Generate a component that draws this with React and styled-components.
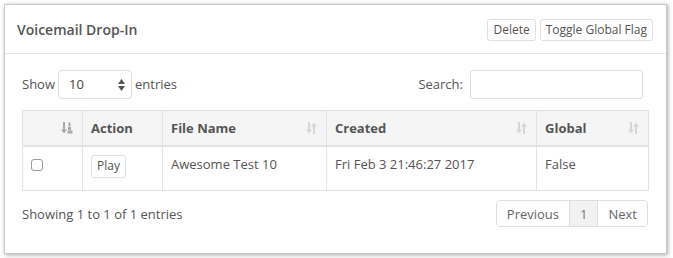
import React from "react";
import styled, { createGlobalStyle } from "styled-components";

const Global = createGlobalStyle`
  html, body {
    margin: 0;
    padding: 0;
    background: #fff;
  }
  body {
    font-family: "Open Sans", "Liberation Sans", sans-serif;
    font-size: 13px;
    color: #555;
  }
`;

const Page = styled.div`
  padding: 4px 6px 6px 4px;
`;

const Panel = styled.div`
  width: 661px;
  border: 1px solid #c8c8c8;
  box-shadow: 1px 1px 4px rgba(0, 0, 0, 0.35);
  background: #fff;
`;

const Header = styled.div`
  height: 48px;
  display: flex;
  align-items: center;
  justify-content: space-between;
  padding: 0 13px 0 12px;
  border-bottom: 1px solid #e6e6e6;
`;

const Title = styled.h3`
  margin: 0;
  font-size: 14px;
  font-weight: 600;
  color: #555;
`;

const Actions = styled.div`
  display: flex;
  gap: 4px;
  margin-top: 2px;
`;

const Button = styled.button`
  font-family: inherit;
  font-size: 12px;
  color: #555;
  background: #fff;
  border: 1px solid #e0e0e0;
  border-radius: 3px;
  height: ${props => props.h || 22}px;
  padding: 0 ${props => props.px || 5}px;
  line-height: 1;
  cursor: pointer;
`;

const Body = styled.div`
  padding: 15px 18px 26px 17px;
`;

const Controls = styled.div`
  display: flex;
  justify-content: space-between;
  align-items: center;
  height: 30px;
  margin-bottom: 11px;
`;

const Label = styled.label`
  display: flex;
  align-items: center;
  gap: ${props => props.gap || 4}px;
  margin-right: ${props => props.mr || 0}px;
  font-size: 13px;
  color: #555;
`;

const SelectBox = styled.div`
  position: relative;
  width: 74px;
  height: 29px;
  box-sizing: border-box;
`;

const Select = styled.select`
  appearance: none;
  width: 100%;
  height: 100%;
  box-sizing: border-box;
  border: 1px solid #ddd;
  border-radius: 4px;
  background: #fff;
  font-family: inherit;
  font-size: 13px;
  color: #444;
  padding: 0 10px;
`;

const Arrows = styled.svg`
  position: absolute;
  right: 7px;
  top: 9px;
  pointer-events: none;
`;

const SearchInput = styled.input`
  width: 173px;
  height: 29px;
  box-sizing: border-box;
  border: 1px solid #ddd;
  border-radius: 3px;
`;

const Table = styled.table`
  width: 626px;
  border-collapse: collapse;
  table-layout: fixed;
`;

const Th = styled.th`
  position: relative;
  height: 35px;
  box-sizing: border-box;
  padding: 0 8px;
  background: #f5f5f5;
  border: 1px solid #e3e3e3;
  border-bottom-width: 2px;
  text-align: left;
  font-size: 13px;
  font-weight: 700;
  color: #555;
`;

const Td = styled.td`
  height: 45px;
  box-sizing: border-box;
  padding: 8px 8px 0;
  vertical-align: top;
  border: 1px solid #e3e3e3;
  font-size: 13px;
  color: #555;
  line-height: 18px;
`;

const SortIcon = styled.svg`
  position: absolute;
  right: 9px;
  top: 11px;
`;

const Check = styled.input`
  appearance: none;
  display: block;
  width: 12px;
  height: 12px;
  margin: 4px 0 0 0;
  border: 1px solid #999;
  border-radius: 3px;
  background: #fff;
`;

const Footer = styled.div`
  display: flex;
  justify-content: space-between;
  align-items: center;
  margin-top: 9px;
  height: 27px;
`;

const Pager = styled.div`
  display: flex;
  border: 1px solid #ddd;
  border-radius: 4px;
  overflow: hidden;
  height: 27px;
  box-sizing: border-box;
`;

const PageLink = styled.a`
  display: flex;
  align-items: center;
  padding: 0 ${props => props.px || 10}px;
  font-size: 13px;
  color: ${props => (props.active ? "#777" : "#666")};
  background: ${props => (props.active ? "#f2f2f2" : "#fff")};
  & + & {
    border-left: 1px solid #ddd;
  }
`;

const BothIcon = () => (
  <SortIcon width="11" height="12" viewBox="0 0 11 12">
    <g fill="#d6d6d6">
      <rect x="2" y="0" width="2" height="8" />
      <polygon points="0,7.5 6,7.5 3,11.5" />
      <rect x="7" y="4" width="2" height="8" />
      <polygon points="5,4.5 11,4.5 8,0.5" />
    </g>
  </SortIcon>
);

const AscIcon = () => (
  <SortIcon width="12" height="12" viewBox="0 0 12 12">
    <g fill="#a8a8a8">
      <rect x="2" y="0" width="2" height="8" />
      <polygon points="0,7.5 6,7.5 3,11.5" />
      <rect x="7.5" y="0.5" width="2" height="4" />
      <rect x="7" y="5" width="3" height="3" />
      <rect x="6.5" y="8.5" width="5" height="3" />
    </g>
  </SortIcon>
);

const columns = [
  { title: "", width: 60, icon: <AscIcon /> },
  { title: "Action", width: 80 },
  { title: "File Name", width: 164, icon: <BothIcon /> },
  { title: "Created", width: 210, icon: <BothIcon /> },
  { title: "Global", width: 112, icon: <BothIcon /> }
];

const rows = [
  { name: "Awesome Test 10", created: "Fri Feb 3 21:46:27 2017", global: "False" }
];

export default function App() {
  return (
    <Page>
      <Global />
      <Panel>
        <Header>
          <Title>Voicemail Drop-In</Title>
          <Actions>
            <Button>Delete</Button>
            <Button>Toggle Global Flag</Button>
          </Actions>
        </Header>
        <Body>
          <Controls>
            <Label gap={3}>
              Show
              <SelectBox>
                <Select defaultValue="10">
                  <option>10</option>
                  <option>25</option>
                  <option>50</option>
                  <option>100</option>
                </Select>
                <Arrows width="7" height="12" viewBox="0 0 7 12">
                  <polygon points="0,5 7,5 3.5,0" fill="#555" />
                  <polygon points="0,7 7,7 3.5,12" fill="#555" />
                </Arrows>
              </SelectBox>
              entries
            </Label>
            <Label gap={7} mr={5}>
              Search:
              <SearchInput type="search" />
            </Label>
          </Controls>
          <Table>
            <colgroup>
              {columns.map((c, i) => (
                <col key={i} style={{ width: c.width }} />
              ))}
            </colgroup>
            <thead>
              <tr>
                {columns.map((c, i) => (
                  <Th key={i}>
                    {c.title}
                    {c.icon}
                  </Th>
                ))}
              </tr>
            </thead>
            <tbody>
              {rows.map((r, i) => (
                <tr key={i}>
                  <Td>
                    <Check type="checkbox" />
                  </Td>
                  <Td>
                    <Button h={23} px={5}>Play</Button>
                  </Td>
                  <Td>{r.name}</Td>
                  <Td>{r.created}</Td>
                  <Td>{r.global}</Td>
                </tr>
              ))}
            </tbody>
          </Table>
          <Footer>
            <span>Showing 1 to 1 of 1 entries</span>
            <Pager>
              <PageLink>Previous</PageLink>
              <PageLink active px={10}>1</PageLink>
              <PageLink>Next</PageLink>
            </Pager>
          </Footer>
        </Body>
      </Panel>
    </Page>
  );
}
